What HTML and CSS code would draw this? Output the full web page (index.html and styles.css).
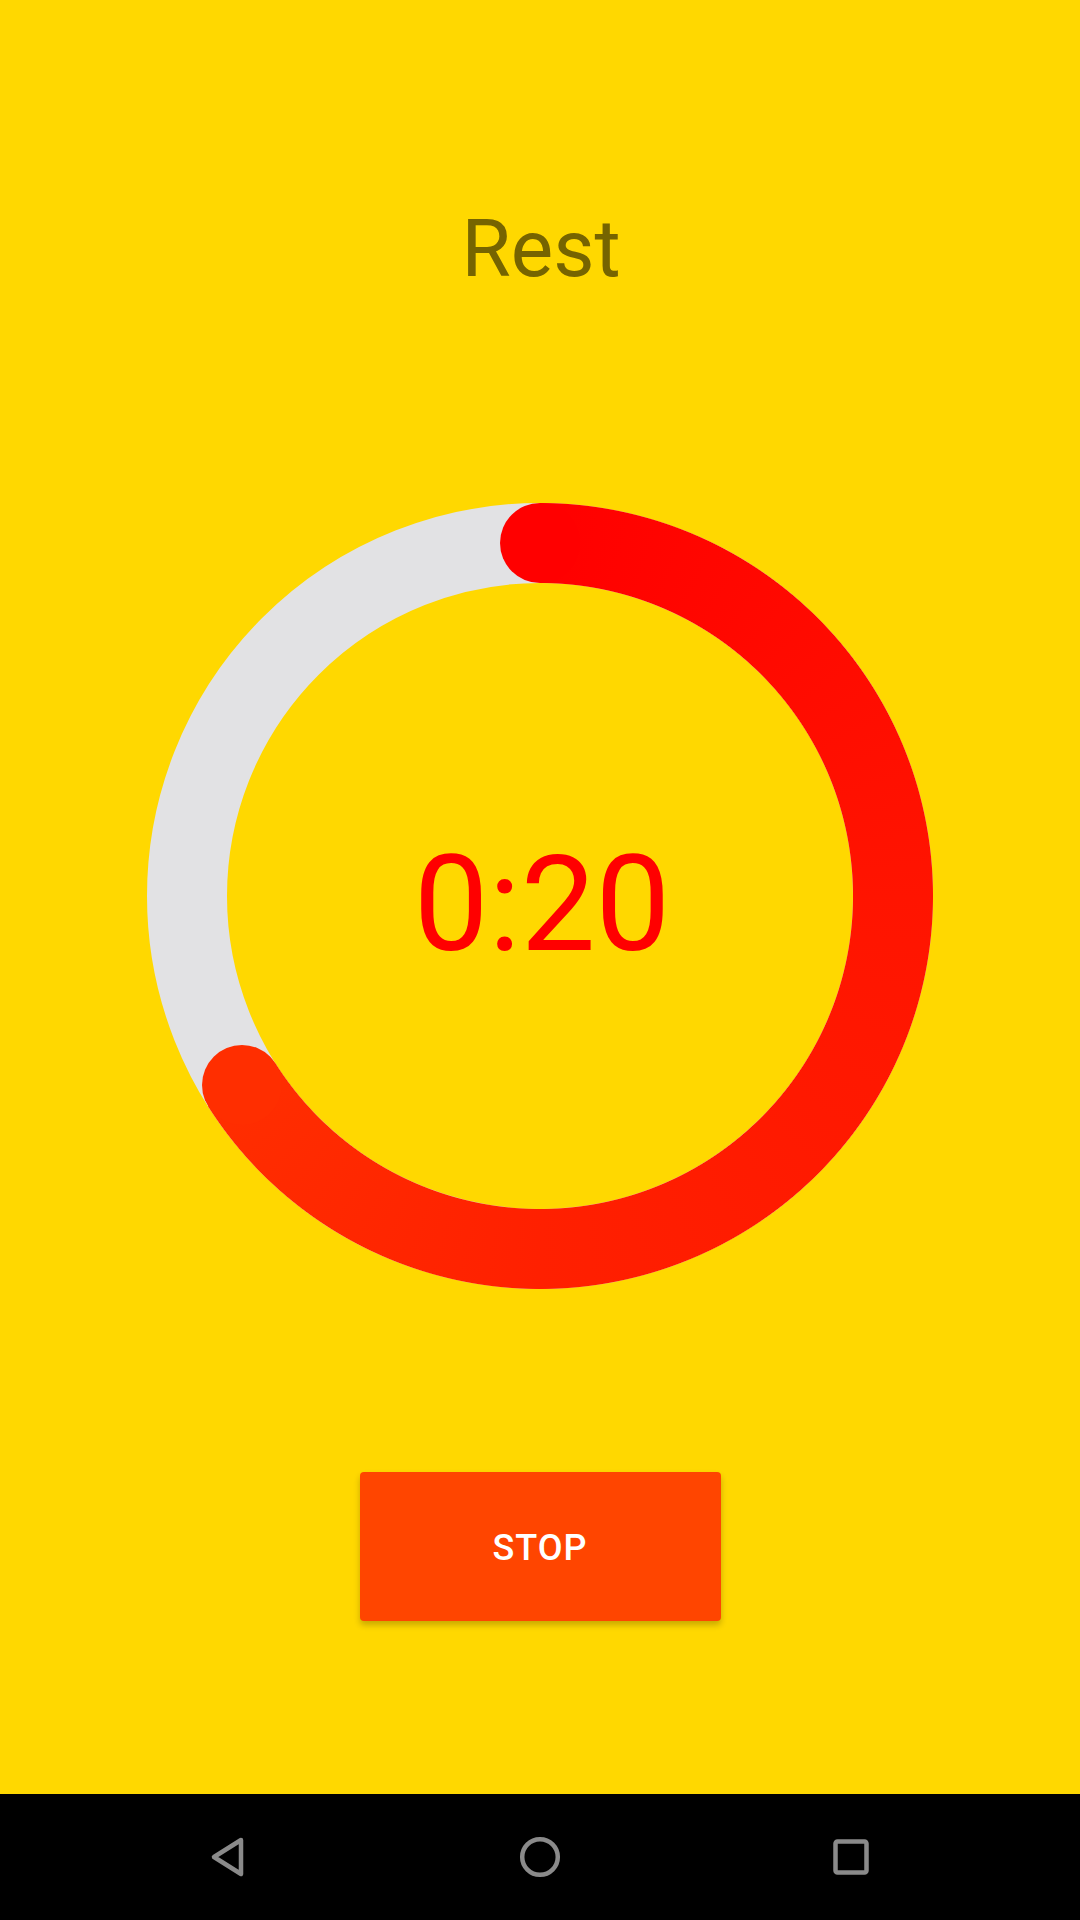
FILE: index.html
```html
<!DOCTYPE html>
<html lang="en">
<head>
<meta charset="utf-8">
<title>Rest</title>
<link rel="stylesheet" href="styles.css">
</head>
<body>
<div class="screen">
  <main class="content">
    <h1 class="phase">Rest</h1>
    <div class="ring">
      <svg class="ring-svg" width="800" height="800" viewBox="0 0 800 800">
        <circle class="track" cx="400" cy="400" r="353" />
      </svg>
      <div class="arc"></div>
      <div class="time">0:20</div>
    </div>
    <button class="stop" type="button">STOP</button>
  </main>
  <nav class="navbar">
    <span class="nav-item">
      <svg width="48" height="48" viewBox="0 0 48 48"><path d="M37 7 L10 24 L37 41 Z" /></svg>
    </span>
    <span class="nav-item">
      <svg width="48" height="48" viewBox="0 0 48 48"><circle cx="24" cy="24" r="17.8" /></svg>
    </span>
    <span class="nav-item">
      <svg width="48" height="48" viewBox="0 0 48 48"><rect x="7.5" y="8.5" width="31" height="31" rx="2" /></svg>
    </span>
  </nav>
</div>
</body>
</html>
```

FILE: styles.css
```css
html, body {
  margin: 0;
  padding: 0;
}

body {
  width: 1080px;
  height: 1920px;
  overflow: hidden;
  background: #FFD800;
  font-family: Roboto, "Liberation Sans", sans-serif;
}

.screen {
  display: flex;
  flex-direction: column;
  height: 1920px;
}

.content {
  height: 1794px;
  display: flex;
  flex-direction: column;
  align-items: center;
  background: #FFD800;
}

.phase {
  margin: 209px 0 0;
  font-size: 80px;
  line-height: 80px;
  font-weight: 400;
  color: #766400;
  padding-left: 2px;
}

.ring {
  position: relative;
  width: 800px;
  height: 800px;
  margin-top: 207px;
}

.ring-svg {
  display: block;
}

.track {
  fill: none;
  stroke: #E2E2E4;
  stroke-width: 80;
}

.arc {
  position: absolute;
  inset: 0;
  border-radius: 50%;
  background: conic-gradient(from 0deg at 50% 50%,
    #FF0000 0deg,
    #FF1400 90deg,
    #FF2000 180deg,
    #FF2E00 237.7deg,
    transparent 237.7deg);
  -webkit-mask-image: radial-gradient(circle closest-side at 50% 50%,
    transparent 312.5px, #000 313.5px, #000 392.5px, transparent 393.5px);
  mask-image: radial-gradient(circle closest-side at 50% 50%,
    transparent 312.5px, #000 313.5px, #000 392.5px, transparent 393.5px);
}

.arc::before,
.arc::after {
  content: "";
  position: absolute;
  width: 80px;
  height: 80px;
  border-radius: 50%;
}

.arc::before {
  left: 360px;
  top: 7px;
  background: #FF0000;
}

.arc::after {
  left: 61.6px;
  top: 548.6px;
  background: #FF2E00;
}

.time {
  position: absolute;
  inset: 0;
  display: flex;
  align-items: center;
  justify-content: center;
  padding: 16px 0 0 4px;
  font-size: 133px;
  line-height: 1;
  color: #FF0000;
}

.stop {
  margin-top: 176px;
  width: 361px;
  height: 149px;
  border: none;
  border-radius: 4px;
  background: #FF4500;
  color: #FFFFFF;
  font-family: Roboto, "Liberation Sans", sans-serif;
  font-size: 36px;
  font-weight: 500;
  letter-spacing: 1px;
  padding: 2px 0 0;
  box-shadow: 0 4px 6px rgba(0, 0, 0, 0.22);
}

.navbar {
  height: 126px;
  background: #000000;
  display: flex;
  align-items: center;
  justify-content: center;
  gap: 212px;
}

.nav-item {
  width: 100px;
  height: 48px;
  display: flex;
  justify-content: center;
  align-items: center;
}

.nav-item svg {
  display: block;
  fill: none;
  stroke: #8A8A8A;
  stroke-width: 4.5;
  stroke-linejoin: round;
}
```
